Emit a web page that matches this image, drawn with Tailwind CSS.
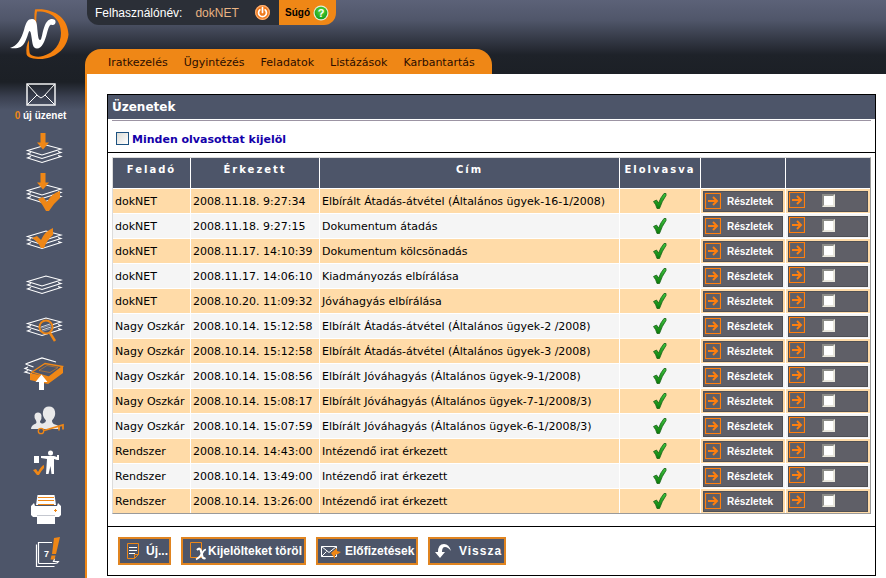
<!DOCTYPE html>
<html lang="hu">
<head>
    <meta charset="utf-8">
    <meta name="viewport" content="width=device-width, initial-scale=1">
    <title>Üzenetek</title>
    <script src="https://cdn.jsdelivr.net/npm/@tailwindcss/browser@4"></script>
</head>
<body class="bg-white font-['DejaVu_Sans',Verdana,sans-serif] text-[11px] text-black">
    <!-- Közös ikonelemek -->
    <svg class="absolute size-0" aria-hidden="true">
        <defs>
            <g id="stack" fill="none" stroke="#fff" stroke-width="1.1">
                <path d="M5.5 23.500 L24 18 L39 22 L20 28 Z"/>
                <path d="M9 25.500 L5.500 27 L20 31.500 L39 25.500 L36 24.500"/>
                <path d="M9 29.500 L5.500 31 L20 35.500 L39 29.500 L36 28.500"/>
            </g>
            <g id="arrow-box" fill="none" stroke="#ff7f0e">
                <path d="M.5 .5h15v15H.5z" stroke-width="1.200"/>
                <path d="M3 8h9M8 4l4 4-4 4" stroke-width="2"/>
            </g>
            <linearGradient id="tick" x1="0" y1="0" x2="0" y2="1">
                <stop offset="0" stop-color="#3fc43f"/>
                <stop offset="1" stop-color="#0a7b0a"/>
            </linearGradient>
            <radialGradient id="green" cx=".5" cy=".35" r=".7">
                <stop offset="0" stop-color="#5fd83a"/>
                <stop offset="1" stop-color="#0d9a1a"/>
            </radialGradient>
        </defs>
    </svg>

    <div class="flex min-h-screen">
        <!-- Bal oldali ikonsáv -->
        <aside class="flex w-[87px] shrink-0 flex-col items-center border-r-2 border-[#ef8716] bg-[#4d5569] bg-[linear-gradient(to_bottom,#5c6278_0px,#50566a_20px,#1e2229_55px,#1c2026_82px,#3a4050_97px,#4d5569_110px)] bg-no-repeat">
            <a href="#" aria-label="dokNET" class="mt-2 mr-1 block">
                <svg width="64" height="54" viewBox="0 0 64 54">
                    <path d="M26 1.500C46 0 59 11 59.500 26.500C58 42 44 52 29 51C22 50.500 18 49 17.500 46C17 41 17.500 36 20 32C20 37 20 43 21 46C24 48.500 29 49.500 34 48C45 45 52 36 52 25C52 11 42 3 28 3.500C27 9 27.500 14 27 19C25 13 25 7 26 1.500Z" fill="#f6820f"/>
                    <path d="M1 40C8 38 12 32 15 22C17 14 19 11 23 11C28 11 28 17 28.500 23C29 28 29.500 32 31 32C33 32 33 24 36 17C39 10 45 10 46.500 13C47 16 45 17.500 43 17C41 16 40 18 38 25C36 33 33 40.500 28 40.500C23.500 40.500 23.500 35 22.500 29C22 25 21.500 23 20.500 23C19.500 23 19 28 16 34C13 40 8 41 1 40Z" fill="#fff"/>
                </svg>
            </a>
            <a href="#" class="mt-[21px] mr-1 flex flex-col items-center gap-0.5">
                <svg width="32" height="23" viewBox="0 0 32 23" fill="none" stroke="#fff">
                    <rect x="2" y="1" width="28" height="21" stroke-width="1.400"/>
                    <path d="M2.500 1.500L13 13L16 15L19 13L29.500 1.500M2.500 21.500L12 12M29.500 21.500L20 12"/>
                </svg>
                <span class="font-['Liberation_Sans',Arial,sans-serif] text-[10px] leading-4 font-bold text-white"><span class="text-[#ef8716]">0</span> új üzenet</span>
            </a>
            <nav class="mt-[3px] ml-0.5 flex flex-col">
                <a href="#" aria-label="Érkeztetés"><svg width="44" height="45" viewBox="0 0 44 45">
                    <use href="#stack"/>
                    <path d="M18.500 6h5v9.500h3.500l-6 7-6-7h3.500z" fill="#ef8716"/>
                </svg></a>
                <a href="#" aria-label="Érkeztetés jóváhagyása"><svg width="44" height="45" viewBox="0 0 44 45">
                    <use href="#stack" y="-5"/>
                    <path d="M18.500 1h5v9.500h3.500l-6 7-6-7h3.500z" fill="#ef8716"/>
                    <path d="M16 27l5-2 4 5q5-9 13-11v7q-6 5-11 13h-3q-3-6-8-12z" fill="#ef8716"/>
                </svg></a>
                <a href="#" aria-label="Jóváhagyás"><svg width="44" height="45" viewBox="0 0 44 45">
                    <use href="#stack" y="-4"/>
                    <path d="M10 21l5-2 4 4q4-9 12-12v7q-6 5-9 13h-3q-3-6-9-10z" fill="#ef8716"/>
                </svg></a>
                <a href="#" aria-label="Iratok"><svg width="44" height="45" viewBox="0 0 44 45">
                    <use href="#stack" y="-4"/>
                </svg></a>
                <a href="#" aria-label="Keresés"><svg width="44" height="45" viewBox="0 0 44 45">
                    <use href="#stack" y="-7"/>
                    <circle cx="24" cy="20" r="6.500" fill="#4d5569" fill-opacity=".6" stroke="#ef8716" stroke-width="2"/>
                    <path d="M19 20l9-3M20 23l9-3" stroke="#cdd0d8"/>
                    <path d="M28 26l5 8" stroke="#ef8716" stroke-width="2.500"/>
                </svg></a>
                <a href="#" aria-label="Irattár"><svg width="44" height="45" viewBox="0 0 44 45">
                    <path d="M3.500 12L20 6l14 4M3.500 12l8 3M6 15l-3 1.500 8 3M6 18.500l-3 1.500 7 2" fill="none" stroke="#fff" stroke-width="1.200"/>
                    <path d="M10 20L23 11.500l17.500 3L27 25z" fill="#4d5569" stroke="#ef8716" stroke-width="1.300"/>
                    <path d="M17 18.500l8-5 11 2-8 5z" fill="none" stroke="#ef8716" stroke-opacity=".5"/>
                    <path d="M8 21l19 4L41 14v7L26 32 8 28z" fill="#ef8716"/>
                    <path d="M17 38v-8h-3.500l6-7.500 6 7.500h-3.500v8z" fill="#fff"/>
                </svg></a>
                <a href="#" aria-label="Felhasználók"><svg width="44" height="45" viewBox="0 0 44 45">
                    <path d="M9 32q0-4 5-5.500q1-1 0-3q-2-2-1.500-5q.5-3 3.500-3t3.500 3q.5 3-1.500 6q0 2 3 2q3-1 3-3q-4-4-3-9q1-5 6-5t6 5q1 5-3 9q0 3 3 4q5 1 5 4.500z" fill="#e9e9ea"/>
                    <circle cx="19" cy="34" r="2.700" fill="none" stroke="#ef8716" stroke-width="1.300"/>
                    <path d="M22 33.500L41 28v4.500M37 29.500v4" fill="none" stroke="#ef8716" stroke-width="1.700"/>
                </svg></a>
                <a href="#" aria-label="Helyettesítés"><svg width="44" height="45" viewBox="0 0 44 45">
                    <path d="M12 14h5v7h-5z" fill="#fff"/>
                    <circle cx="28.500" cy="11" r="2.500" fill="#fff"/>
                    <path d="M19 14h13l3 1v-2h2v5h-2l-3-1v15h-2.500l-1-8-2 8h-2.500l1-15-6-1z" fill="#fff"/>
                    <path d="M11 28l3-1 2 3q3-6 6-7v3q-3 3-5 7h-2z" fill="#ef8716"/>
                </svg></a>
                <a href="#" aria-label="Nyomtatás"><svg width="44" height="45" viewBox="0 0 44 45">
                    <path d="M15.500 8h17l1.500 10h-20z" fill="#fff"/>
                    <path d="M12 16l1 3h22l1-3 3 3v9l-2 2H11l-2-2v-9z" fill="#fff"/>
                    <path d="M15 28.500h18" stroke="#c4c7cf"/>
                    <path d="M16 10.500h16M16 13.500h16M16 17.500h16" stroke="#ef8716"/>
                    <path d="M15 29h18v8H15z" fill="#fff"/>
                    <path d="M32 23.500h3M33.500 22v3" stroke="#ef8716"/>
                </svg></a>
                <a href="#" aria-label="Naptár"><svg width="44" height="45" viewBox="0 0 44 45">
                    <path d="M14.500 12.500v22h18M30 10.500H16.500v20q0 1 1 1h15q3 0 4-2h-5q1-2 1-3" fill="none" stroke="#fff" stroke-width="1.200"/>
                    <text x="22" y="25" fill="#fff" font-family="Liberation Sans" font-weight="bold" font-size="9">7</text>
                    <path d="M32 6l6-1-4 17h-4z" fill="#ef8716"/>
                    <path d="M29.500 23.500h4l-1 4h-4z" fill="#ef8716"/>
                </svg></a>
            </nav>
        </aside>

        <div class="min-w-0 flex-1">
            <header class="-ml-0.5 flex h-[74px] flex-col justify-between bg-[linear-gradient(to_bottom,#5c6278_0px,#50566a_20px,#1e2229_55px,#1c2026_74px)]">
                <div class="flex h-[25px] pl-0.5">
                    <div class="flex w-48 items-center rounded-bl-xl bg-[#2b2f37] pl-2 font-['Liberation_Sans',Arial,sans-serif] text-xs text-white">
                        <span>Felhasználónév:</span>
                        <span class="ml-[13px] text-[#e9b483]">dokNET</span>
                        <button type="button" aria-label="Kijelentkezés" class="ml-4">
                            <svg width="15" height="15" viewBox="0 0 14 14">
                                <circle cx="7" cy="7" r="7" fill="#f07a1c"/>
                                <circle cx="7" cy="7" r="6.400" fill="none" stroke="#f9b27a"/>
                                <path d="M4.500 4.500a3.700 3.700 0 1 0 5 0M7 2.500V7" fill="none" stroke="#fff" stroke-width="1.600" stroke-linecap="round"/>
                            </svg>
                        </button>
                    </div>
                    <a href="#" class="flex w-[57px] items-center gap-[3px] rounded-br-xl bg-[#ef8716] pl-1.5 font-['Liberation_Sans',Arial,sans-serif] text-[10px] font-bold">
                        Súgó
                        <svg width="16" height="16" viewBox="0 0 16 16">
                            <circle cx="8" cy="8" r="7.500" fill="#dff0d8"/>
                            <circle cx="8" cy="8" r="6.300" fill="url(#green)"/>
                            <text x="8" y="12" text-anchor="middle" fill="#fff" font-family="Liberation Sans" font-weight="bold" font-size="11">?</text>
                        </svg>
                    </a>
                </div>
                <nav class="flex h-[25px] w-[407px] items-center gap-4 rounded-t-2xl bg-[#ef8716] pt-[3px] pl-[23px] text-[11px] text-[#2b0d00]">
                    <a href="#">Iratkezelés</a>
                    <a href="#">Ügyintézés</a>
                    <a href="#">Feladatok</a>
                    <a href="#">Listázások</a>
                    <a href="#">Karbantartás</a>
                </nav>
            </header>

            <main class="pt-5 pr-2.5 pb-0.5 pl-5">
                <section class="border border-black">
                    <h1 class="h-6 bg-[#4d5569] pl-1 text-xs leading-6 font-bold text-white">Üzenetek</h1>
                    <div class="mx-1 mt-px border-t border-[#9c94a3]"></div>
                    <div class="flex h-8 items-center gap-[3px] border-b border-black pt-1 pl-2">
                        <input type="checkbox" id="mind" class="size-[13px] appearance-none border border-[#1c5180] bg-linear-to-br from-[#dcdcd7] to-white checked:bg-[#1c5180]">
                        <label for="mind" class="pt-1 font-bold text-[#1400aa]">Minden olvasottat kijelöl</label>
                    </div>

                    <div class="px-1 pt-1 pb-3">
                        <table class="w-full table-fixed border-separate border-spacing-0 border border-t-[#dcdcdc] border-r-[#9a9a9a] border-b-[#9a9a9a] border-l-[#dcdcdc]">
                            <colgroup>
                                <col class="w-[78px]">
                                <col class="w-[129px]">
                                <col>
                                <col class="w-[81px]">
                                <col class="w-[85px]">
                                <col class="w-[84px]">
                            </colgroup>
                            <thead>
                                <tr class="h-[31px] bg-[#4d5569] text-[10px] tracking-[2px] text-white">
                                    <th class="border-r border-b border-white pb-2">Feladó</th>
                                    <th class="border-r border-b border-white pb-2">Érkezett</th>
                                    <th class="border-r border-b border-white pb-2">Cím</th>
                                    <th class="border-r border-b border-white pb-2">Elolvasva</th>
                                    <th class="border-r border-b border-white"></th>
                                    <th class="border-b border-white"></th>
                                </tr>
                            </thead>
                            <tbody id="uzenetek" class="whitespace-nowrap"></tbody>
                        </table>
                    </div>

                    <!-- Műveletek -->
                    <div class="flex gap-2.5 border-t border-black px-2.5 py-2.5 font-['Liberation_Sans',Arial,sans-serif] text-xs font-bold text-white">
                        <button type="button" class="flex h-7 w-[53px] items-center gap-1.5 border-2 border-[#e08420] bg-[#4d5569] pl-1.5">
                            <svg class="shrink-0" width="14" height="18" viewBox="0 0 14 18" fill="none">
                                <path d="M1.500 1.500h11v11l-4 4h-7z" stroke="#ef8716"/>
                                <path d="M8.500 16.500v-4h4" stroke="#ef8716"/>
                                <path d="M3 5.500h8M3 8.500h8M3 11.500h6" stroke="#fff"/>
                            </svg>
                            Új...
                        </button>
                        <button type="button" class="flex h-7 w-[125px] items-center gap-px border-2 border-[#e08420] bg-[#4d5569] pl-1.5 whitespace-nowrap">
                            <svg class="shrink-0" width="18" height="20" viewBox="0 0 18 20" fill="none">
                                <path d="M1.500 1.500h11v15h-11z" stroke="#ef8716"/>
                                <path d="M8 9q3-3 4 1l1.500 6q1 2 3 1" stroke="#fff" stroke-width="2.200"/>
                                <path d="M17 8.500q-2 0-4 4t-6 6" stroke="#fff" stroke-width="1.700"/>
                            </svg>
                            Kijelölteket töröl
                        </button>
                        <button type="button" class="flex h-7 w-[102px] items-center gap-1 border-2 border-[#e08420] bg-[#4d5569] pl-[3px] whitespace-nowrap">
                            <svg class="shrink-0" width="20" height="16" viewBox="0 0 20 16" fill="none">
                                <path d="M.5 3.500h15v10H.5zM.5 3.500l7.500 6 7.500-6M.5 13.500l5-5" stroke="#fff"/>
                                <path d="M10 10l6-5v3l4 1-3 2-3 1v4z" fill="#ef8716"/>
                            </svg>
                            Előfizetések
                        </button>
                        <button type="button" class="flex h-7 w-[78px] items-center gap-2 border-2 border-[#e08420] bg-[#4d5569] pl-[5px] tracking-[1px]">
                            <svg class="shrink-0" width="16" height="16" viewBox="0 0 16 16">
                                <path d="M0 9h3q0-8 6-8q5 0 7 7q-3-4-6-4q-3 0-3 5h3l-5 6z" fill="#fff"/>
                            </svg>
                            Vissza
                        </button>
                    </div>
                </section>
            </main>
        </div>
    </div>

    <script>
        const uzenetek = [
            ['dokNET', '2008.11.18. 9:27:34', 'Elbírált Átadás-átvétel (Általános ügyek-16-1/2008)'],
            ['dokNET', '2008.11.18. 9:27:15', 'Dokumentum átadás'],
            ['dokNET', '2008.11.17. 14:10:39', 'Dokumentum kölcsönadás'],
            ['dokNET', '2008.11.17. 14:06:10', 'Kiadmányozás elbírálása'],
            ['dokNET', '2008.10.20. 11:09:32', 'Jóváhagyás elbírálása'],
            ['Nagy Oszkár', '2008.10.14. 15:12:58', 'Elbírált Átadás-átvétel (Általános ügyek-2 /2008)'],
            ['Nagy Oszkár', '2008.10.14. 15:12:58', 'Elbírált Átadás-átvétel (Általános ügyek-3 /2008)'],
            ['Nagy Oszkár', '2008.10.14. 15:08:56', 'Elbírált Jóváhagyás (Általános ügyek-9-1/2008)'],
            ['Nagy Oszkár', '2008.10.14. 15:08:17', 'Elbírált Jóváhagyás (Általános ügyek-7-1/2008/3)'],
            ['Nagy Oszkár', '2008.10.14. 15:07:59', 'Elbírált Jóváhagyás (Általános ügyek-6-1/2008/3)'],
            ['Rendszer', '2008.10.14. 14:43:00', 'Intézendő irat érkezett'],
            ['Rendszer', '2008.10.14. 13:49:00', 'Intézendő irat érkezett'],
            ['Rendszer', '2008.10.14. 13:26:00', 'Intézendő irat érkezett']
        ];

        document.getElementById('uzenetek').innerHTML = uzenetek.map(([felado, erkezett, cim]) => `
            <tr class="h-[25px] last:h-6 odd:bg-[#ffdba8] even:bg-[#f5f5f5] [&:last-child>td]:border-b-0">
                <td class="border-r border-b border-white pt-0.5 pl-0.5">${felado}</td>
                <td class="border-r border-b border-white pt-0.5 pl-0.5">${erkezett}</td>
                <td class="overflow-hidden border-r border-b border-white pt-0.5 pl-0.5">${cim}</td>
                <td class="border-r border-b border-white">
                    <svg class="mx-auto" role="img" aria-label="Elolvasva" width="14" height="16" viewBox="0 0 14 16">
                        <path d="M.5 8.500l3-1.500 2 3Q8 4 11 .5h2v2Q9 8 6.500 15.500H4Q3 11.500 .5 8.500z" fill="url(#tick)" stroke="#176117" stroke-width=".8"/>
                    </svg>
                </td>
                <td class="border-r border-b border-white px-0.5">
                    <button type="button" class="flex h-[21px] w-full items-center gap-1.5 border border-[#4f5055] bg-[#5f5f67] pb-px pl-px font-['Liberation_Sans',Arial,sans-serif] text-[10px] font-bold text-white">
                        <svg class="shrink-0" width="16" height="16" viewBox="0 0 16 16"><use href="#arrow-box"/></svg>
                        <span class="pt-px">Részletek</span>
                    </button>
                </td>
                <td class="border-b border-white px-0.5">
                    <label class="flex h-[21px] items-center gap-[17px] border border-[#4f5055] bg-[#5f5f67] pb-[3px]">
                        <svg class="shrink-0" width="16" height="16" viewBox="0 0 16 16"><use href="#arrow-box"/></svg>
                        <input type="checkbox" aria-label="Kijelöl" class="mt-px size-[13px] appearance-none border-2 border-t-[#8c8c88] border-r-[#e8e6dc] border-b-[#e8e6dc] border-l-[#8c8c88] bg-white checked:bg-[#ef8716]">
                    </label>
                </td>
            </tr>`).join('');
    </script>
</body>
</html>
